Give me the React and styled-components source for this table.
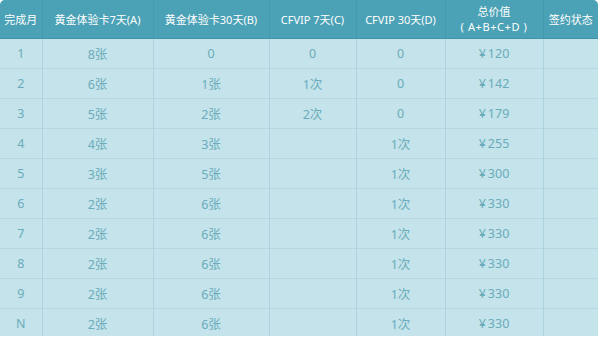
import React from 'react';
import styled, { createGlobalStyle } from 'styled-components';

const GlobalStyle = createGlobalStyle`
    html, body {
        margin: 0;
        padding: 0;
        background: #ffffff;
    }
`;

const Wrap = styled.div`
    width: 598px;
    height: 336px;
    border-radius: 5px 5px 0 0;
    overflow: hidden;
    background: #c4e3ea;
    font-family: "Noto Sans", "Noto Sans CJK SC", sans-serif;
`;

const Table = styled.table`
    width: 100%;
    border-collapse: collapse;
    table-layout: fixed;
`;

const HeadCell = styled.th`
    height: 38px;
    padding: 0;
    background: #4ba1b5;
    color: #ffffff;
    font-size: 11px;
    font-weight: normal;
    line-height: 15px;
    text-align: center;
    border-left: 1px solid #449aae;
    border-bottom: 1px solid #3f93a7;
    &:first-child { border-left: none; }
`;

const Formula = styled.span`
    letter-spacing: 0.6px;
`;

const Cell = styled.td`
    height: 29px;
    padding: 0;
    color: #6aacbb;
    font-size: 12.5px;
    text-align: center;
    border-left: 1px solid #add4de;
    border-top: 1px solid #b3d8e1;
    &:first-child { border-left: none; }
`;

const Yen = styled.span`
    margin-right: 2px;
`;

const widths = [42, 111, 116, 87, 89, 98, 55];

const headers = [
    '完成月',
    '黄金体验卡7天(A)',
    '黄金体验卡30天(B)',
    'CFVIP 7天(C)',
    'CFVIP 30天(D)',
    <>总价值<br /><Formula>( A+B+C+D )</Formula></>,
    '签约状态',
];

const rows = [
    ['1', '8张', '0', '0', '0', '120'],
    ['2', '6张', '1张', '1次', '0', '142'],
    ['3', '5张', '2张', '2次', '0', '179'],
    ['4', '4张', '3张', '', '1次', '255'],
    ['5', '3张', '5张', '', '1次', '300'],
    ['6', '2张', '6张', '', '1次', '330'],
    ['7', '2张', '6张', '', '1次', '330'],
    ['8', '2张', '6张', '', '1次', '330'],
    ['9', '2张', '6张', '', '1次', '330'],
    ['N', '2张', '6张', '', '1次', '330'],
];

export default function App() {
    return <>
        <GlobalStyle />
        <Wrap>
            <Table>
                <colgroup>
                    {widths.map((w, i) => <col key={i} style={{ width: w }} />)}
                </colgroup>
                <thead>
                    <tr>
                        {headers.map((h, i) => <HeadCell key={i}>{h}</HeadCell>)}
                    </tr>
                </thead>
                <tbody>
                    {rows.map((r, i) => (
                        <tr key={i}>
                            {r.slice(0, 5).map((c, j) => <Cell key={j}>{c}</Cell>)}
                            <Cell><Yen>¥</Yen>{r[5]}</Cell>
                            <Cell />
                        </tr>
                    ))}
                </tbody>
            </Table>
        </Wrap>
    </>;
}
